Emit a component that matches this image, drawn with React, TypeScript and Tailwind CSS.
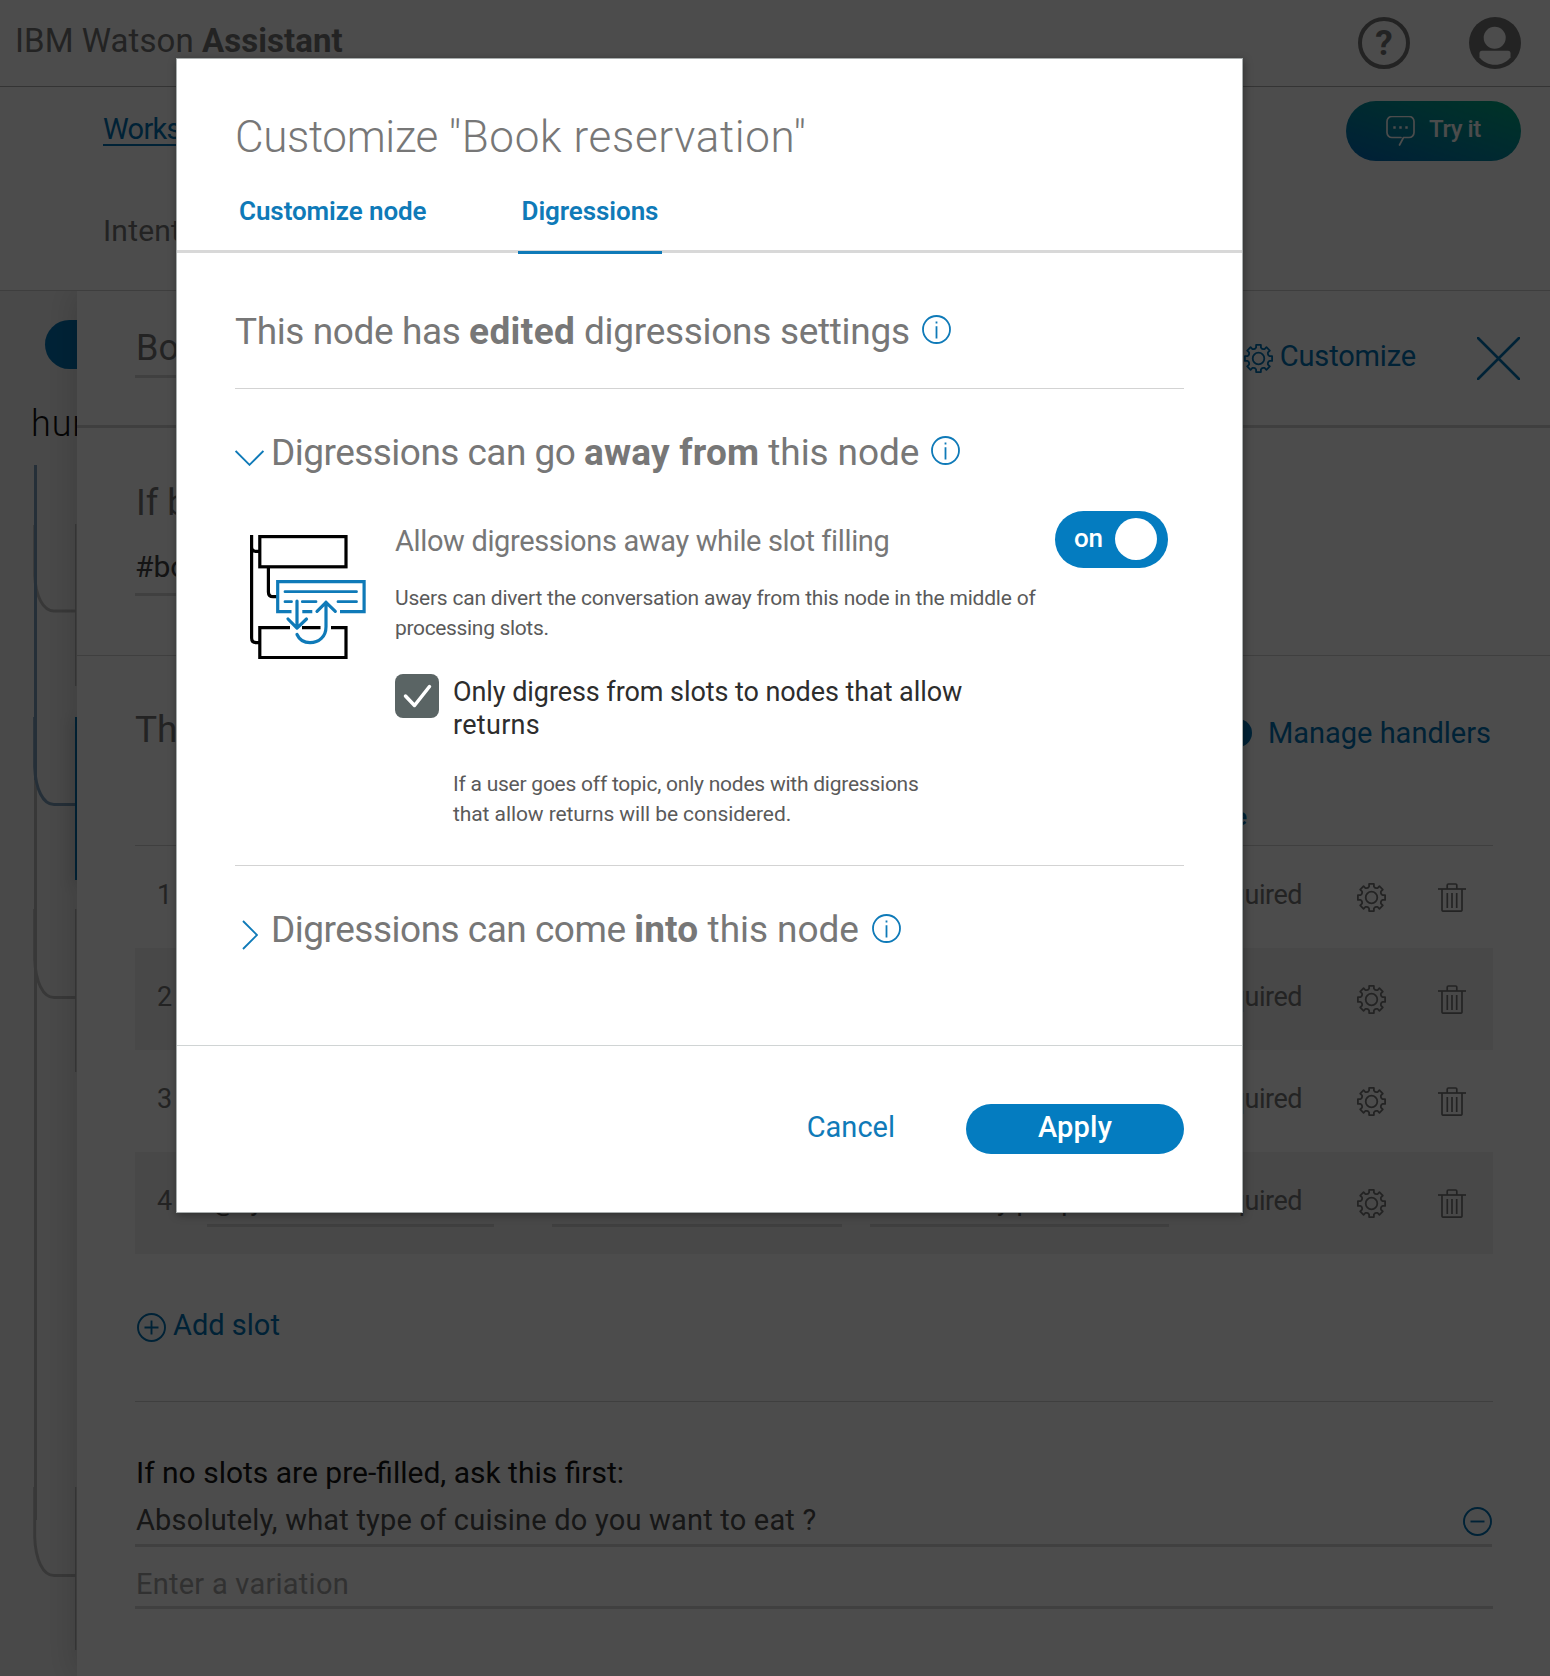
import React from "react";

const TOOTH_ANGLES = [0, 45, 90, 135, 180, 225, 270, 315];
const TOOTH_POINTS: [number, number][] = [
  [-3.3, -9.9],
  [-2.4, -11],
  [-2.4, -13.6],
  [2.4, -13.6],
  [2.4, -11],
  [3.3, -9.9],
];

const gearPath =
  "M" +
  TOOTH_ANGLES.flatMap((deg) => {
    const a = (deg * Math.PI) / 180;
    return TOOTH_POINTS.map(
      ([x, y]) =>
        `${(14.5 + x * Math.cos(a) - y * Math.sin(a)).toFixed(2)} ${(14.5 + x * Math.sin(a) + y * Math.cos(a)).toFixed(2)}`,
    );
  }).join("L") +
  "Z";

function GearIcon({ className = "" }: { className?: string }) {
  return (
    <svg className={`h-[29px] w-[29px] shrink-0 ${className}`} viewBox="0 0 29 29" fill="none" stroke="currentColor" strokeWidth="1.8" strokeLinejoin="round">
      <path d={gearPath} />
      <circle cx="14.5" cy="14.5" r="5.8" />
    </svg>
  );
}

function TrashIcon({ className = "" }: { className?: string }) {
  return (
    <svg className={`h-[29px] w-[28px] shrink-0 ${className}`} viewBox="0 0 28 29" fill="none" stroke="currentColor" strokeWidth="1.7">
      <path d="M0 6h28" />
      <path d="M9.2 6V2.2a1.2 1.2 0 0 1 1.2-1.2h7.2a1.2 1.2 0 0 1 1.2 1.2V6" />
      <path d="M4 6v21a1.2 1.2 0 0 0 1.2 1.2h17.6a1.2 1.2 0 0 0 1.2-1.2V6" />
      <path d="M9.3 10v15M14 10v15M18.7 10v15" />
    </svg>
  );
}

function InfoIcon({ className = "" }: { className?: string }) {
  return (
    <svg className={`h-[29px] w-[29px] shrink-0 text-[#0f7ab8] ${className}`} viewBox="0 0 29 29" fill="none" stroke="currentColor" strokeWidth="1.8">
      <circle cx="14.5" cy="14.5" r="13.5" />
      <path d="M14.5 11.2v12.2M14.5 6.6v2" />
    </svg>
  );
}

function CircleIcon({ plus = false, className = "" }: { plus?: boolean; className?: string }) {
  return (
    <svg className={`h-[29px] w-[29px] shrink-0 ${className}`} viewBox="0 0 29 29" fill="none" stroke="currentColor" strokeWidth="1.9">
      <circle cx="14.5" cy="14.5" r="13.5" />
      <path d={plus ? "M7.5 14.5h14M14.5 7.5v14" : "M7.5 14.5h14"} />
    </svg>
  );
}

function TopBar() {
  return (
    <header className="flex h-[87px] items-start border-b border-[#aeaeae] pl-[15px] pr-[29px]">
      <h1 className="mt-[21px] whitespace-pre text-[33px] leading-10 tracking-[0.06px] text-[#777]">
        IBM Watson <b className="font-bold">Assistant</b>
      </h1>
      <div className="ml-auto mt-[17px] flex gap-[59px] text-[#777]">
        <div className="flex h-[52px] w-[52px] items-center justify-center rounded-full border-[4.5px] border-[#777] text-[35px] font-bold leading-none">
          ?
        </div>
        <svg className="h-[52px] w-[52px]" viewBox="0 0 52 52">
          <circle cx="26" cy="26" r="26" fill="currentColor" />
          <circle cx="25.7" cy="20.7" r="11" fill="#fff" />
          <path d="M13 33.700h26a2.500 2.500 0 0 1 2.500 2.500v4C38 45 32 47.800 26 47.800S14 45 10.500 40.200v-4a2.500 2.500 0 0 1 2.500-2.500z" fill="#fff" />
        </svg>
      </div>
    </header>
  );
}

function WorkspaceNav() {
  return (
    <nav className="flex h-[204px] items-start border-b border-[#cfcfcf] pl-[103px] pr-[29px]">
      <div className="pt-[22px]">
        <div className="flex h-10">
          <a className="h-[37px] border-b-2 border-[#0072b5] text-[29px] leading-10 tracking-[-0.7px] text-[#0072b5]">Workspaces</a>
        </div>
        <div className="mt-[62px] text-[30px] leading-10 tracking-[0.2px] text-[#777]">Intents</div>
      </div>
      <button className="ml-auto mt-3.5 flex h-[60px] w-[175px] items-start rounded-full bg-linear-to-tr from-[#0068b8] to-[#00ac80] pl-10 text-white">
        <svg className="mt-[15px] h-[30px] w-[29px]" viewBox="0 0 29 30" fill="none" stroke="currentColor" strokeWidth="1.7">
          <path d="M13.500 29l4-7.500H23a5 5 0 0 0 5-5v-11a5 5 0 0 0-5-5H6a5 5 0 0 0-5 5v11a5 5 0 0 0 5 5h9" strokeLinecap="round" strokeLinejoin="round" />
          <path d="M7.300 11.500h2.400M13.300 11.500h2.400M19.300 11.500h2.400" strokeWidth="2.4" />
        </svg>
        <span className="ml-[14px] mt-2 text-[24px] font-medium leading-10 tracking-[-0.4px]">Try it</span>
      </button>
    </nav>
  );
}

/* Strip of the dialog tree that stays visible beside the node panel. */
function TreeRail() {
  return (
    <aside className="relative h-[1385px] w-[77px] shrink-0 overflow-hidden bg-[#f5f5f5]">
      <svg className="absolute inset-0 h-full w-full" viewBox="0 291 77 1385" fill="none" strokeWidth="3">
        <path d="M35.500 780v740" stroke="#bdbdbd" />
        <path d="M34.700 525v50C35.500 596 43 611 54 611h22M34.700 909v50C35.500 982 43 997.500 54 997.500h22M34.700 1487v50C35.500 1560 43 1575.500 54 1575.500h22" stroke="#bdbdbd" />
        <path d="M34.700 717v50C35.500 789 43 804.500 54 804.500h22" stroke="#7d9fbc" />
        <path d="M35.500 465v315" stroke="#7d9fbc" />
        <path d="M75.700 524v162M75.700 909v163M75.700 1487v163" stroke="#bdbdbd" strokeWidth="1.3" />
      </svg>
      <div className="absolute left-[45px] top-[29px] h-[49px] w-[120px] rounded-full bg-[#0076b8]" />
      <div className="absolute left-[31px] top-[113px] whitespace-nowrap text-[36px] font-light leading-10 tracking-[0.9px] text-[#111]">hungry</div>
      <div className="absolute left-[75px] top-[426px] h-[163px] w-[4px] bg-[#0072b5] shadow-[0_4px_16px_rgba(0,0,0,0.3)]" />
    </aside>
  );
}

function SlotRow({ index }: { index: number }) {
  return (
    <div className="flex h-[102px] items-start pl-[22px] pr-[27px] text-[27px] leading-10 text-[#777] even:bg-[#f1f1f1]">
      <div className="mt-[29px] w-[50px]">{index}</div>
      {index === 4 ? (
        <>
          <div className="mt-[29px] h-[46px] w-[287px] border-b-[3px] border-[#d2d2d2] pl-[5px] text-[#555]">@sys-number</div>
          <div className="ml-[58px] mt-[29px] h-[46px] w-[290px] border-b-[3px] border-[#d2d2d2]" />
          <div className="ml-[28px] mt-[29px] h-[46px] w-[299px] whitespace-nowrap border-b-[3px] border-[#d2d2d2] pl-3 text-[#555]">How many people</div>
        </>
      ) : null}
      <div className="ml-auto mt-[29px] tracking-[-0.5px]">Required</div>
      <GearIcon className="ml-[55px] mt-[37px]" />
      <TrashIcon className="ml-[52px] mt-[37px]" />
    </div>
  );
}

function NodePanel() {
  return (
    <main className="relative h-[1385px] grow bg-white shadow-[0_0_34px_rgba(0,0,0,0.18)]">
      <section className="flex h-[137px] items-start border-b-[3px] border-[#d2d2d2] pl-[58px]">
        <div className="mt-[35px] h-[52px] w-[900px] border-b-[3px] border-[#d8d8d8] pl-px text-[36px] leading-[44px] text-[#777]">Book</div>
        <div className="ml-auto mr-[30px] flex text-[#0072b5]">
          <GearIcon className="mt-[53px]" />
          <span className="ml-[7px] mt-[45px] text-[29px] leading-10 tracking-[-0.15px]">Customize</span>
          <svg className="ml-[61px] mt-[46px] h-[43px] w-[43px]" viewBox="0 0 43 43" fill="none" stroke="currentColor" strokeWidth="2.6" strokeLinecap="round">
            <path d="M1 1l41 41M42 1L1 42" />
          </svg>
        </div>
      </section>

      <section className="h-[228px] border-b border-[#d2d2d2] pl-[58px] pt-[53px]">
        <div className="pl-px text-[36px] leading-[44px] text-[#777]">If bot</div>
        <div className="mt-[22px] h-[49px] w-[900px] border-b-[3px] border-[#d8d8d8] text-[30px] leading-10 text-[#444]">#book</div>
      </section>

      <section className="pl-[58px] pr-[57px]">
        <div className="flex h-[190px] items-start border-b border-[#d2d2d2] pt-[52px]">
          <div className="text-[37px] leading-[44px] text-[#777]">Then</div>
          <div className="ml-auto flex text-[#0072b5]">
            <div className="relative mt-[11px] h-7 w-7 rounded-full bg-[#0072b5]">
              <div className="absolute right-[5px] top-[83px] text-[24px] font-bold leading-[30px]">e</div>
            </div>
            <span className="ml-4 mr-[2px] mt-[5px] text-[29px] leading-10">Manage handlers</span>
          </div>
        </div>
        <div>
          {[1, 2, 3, 4].map((n) => (
            <SlotRow key={n} index={n} />
          ))}
        </div>
        <div className="flex h-[148px] items-start border-b border-[#d2d2d2] pt-[51px] text-[#0072b5]">
          <CircleIcon plus className="ml-0.5 mt-2" />
          <span className="ml-[7px] text-[29px] leading-10">Add slot</span>
        </div>
        <div className="pl-px pt-[51px] text-[30px] leading-10 text-[#151515]">If no slots are pre-filled, ask this first:</div>
        <div className="mr-px mt-[7px] flex h-[47px] justify-between border-b-[3px] border-[#d5d5d5] pl-px text-[29px] leading-10 tracking-[0.2px] text-[#4d4d4d]">
          Absolutely, what type of cuisine do you want to eat ?
          <CircleIcon className="mt-[7px] text-[#0072b5]" />
        </div>
        <div className="mt-[17px] h-[45px] border-b-[3px] border-[#d5d5d5] pl-px text-[29px] leading-10 tracking-[0.25px] text-[#a5a5a5]">Enter a variation</div>
      </section>
    </main>
  );
}

function DigressionIllustration() {
  return (
    <svg className="ml-[15px] mt-6 h-[124px] w-[116px] shrink-0" viewBox="0 0 116 124" fill="none" strokeWidth="3.2">
      <g stroke="#000">
        <rect x="9.800" y="1.600" width="86.200" height="30.200" />
        <path d="M1.600 0v103q0 4.700 4.700 4.700H10M1.600 12q0 4.300 4.300 4.300H10M18.400 33v24q0 4.700 4.700 4.700H27" />
        <path d="M40 92.600H9.800v29.900h86.200V92.600H81M52 92.600h18.500" />
      </g>
      <g stroke="#0f7ab8">
        <path d="M41.500 76.700H27.700v-30h86.400v30H90M52.300 76.700h10" />
        <path d="M35 56.700h71.500M35 66.700h6.500M52.300 66.700H66M88 66.700h18.500" strokeWidth="2.800" strokeLinecap="round" />
        <path d="M47 66v27M38 84l9 9.200 9.500-9.200" strokeLinecap="round" strokeLinejoin="round" />
        <path d="M47 99.500C49.500 105 54 107.700 60 107.700c9 0 16-6 16-16V67M67 76.300l9-9 9.300 9" strokeLinecap="round" strokeLinejoin="round" />
      </g>
    </svg>
  );
}

function CustomizeDialog() {
  return (
    <div role="dialog" className="absolute left-[176px] top-[58px] flex h-[1155px] w-[1067px] flex-col border border-[#a8adad] bg-white shadow-[1px_2px_8px_rgba(0,0,0,0.35)]">
      <div className="border-b-[3px] border-[#d8d8d8] pl-[58px] pt-[50px]">
        <h2 className="whitespace-pre text-[44px] font-light leading-[56px] tracking-[0.65px] text-[#777]">
          <span className="tracking-[-0.35px]">Customize </span>"Book reservation"
        </h2>
        <div className="-mb-1 mt-[30px] flex h-[59px] text-[26px] font-semibold leading-8 tracking-[-0.08px] text-[#0f7ab8]">
          <div className="w-[283px] pl-1">Customize node</div>
          <div className="w-36 border-b-[3px] border-[#0f7ab8] text-center">Digressions</div>
        </div>
      </div>

      <div className="grow px-[58px] text-[#777]">
        <div className="flex items-center border-b border-[#d3d3d3] pb-8 pt-[55px]">
          <h3 className="whitespace-pre text-[37px] leading-[48px] tracking-[-0.4px]">
            This node has <b className="tracking-[0.35px]">edited</b><span className="tracking-[-0.3px]"> digressions settings</span>
          </h3>
          <InfoIcon className="-mt-1.5 ml-[12px]" />
        </div>

        <div className="border-b border-[#d3d3d3] pb-[35px] pt-[40px]">
          <div className="flex items-center">
            <svg className="mt-2.5 h-4 w-[29px] shrink-0 text-[#0f7ab8]" viewBox="0 0 29 16" fill="none" stroke="currentColor" strokeWidth="1.900">
              <path d="M0.600 1l13.900 13.800L28.400 1" />
            </svg>
            <h3 className="ml-[7px] whitespace-pre text-[37px] leading-[48px] tracking-[-0.53px]">
              Digressions can go <b className="tracking-[0.2px]">away from</b><span className="tracking-[-0.1px]"> this node</span>
            </h3>
            <InfoIcon className="-mt-1.5 ml-[12px]" />
          </div>

          <div className="mt-[34px] flex items-start">
            <DigressionIllustration />
            <div className="ml-[29px] grow">
              <div className="flex h-12 items-start">
                <div className="mt-3 text-[29px] leading-9 tracking-[-0.36px]">Allow digressions away while slot filling</div>
                <div className="ml-auto mr-4 flex h-[57px] w-[113px] items-center justify-between rounded-full bg-[#047cc0] pl-[19px] pr-[11px] text-[26px] font-medium leading-none text-white">
                  <span className="-mt-1 tracking-[-0.2px]">on</span>
                  <span className="-mt-px h-[42px] w-[42px] rounded-full bg-white" />
                </div>
              </div>
              <p className="mt-6 text-[21px] leading-[30px] tracking-[-0.22px] text-[#5a5a5a]">
                Users can divert the conversation away from this node in the middle of
                <br />
                <span className="tracking-[-0.34px]">processing slots.</span>
              </p>
              <div className="mt-[31px] flex">
                <svg className="h-11 w-11 shrink-0 rounded-lg bg-[#5a6464]" viewBox="0 0 44 44" fill="none" stroke="#fff" strokeWidth="3.500" strokeLinecap="round" strokeLinejoin="round">
                  <path d="M10.500 22l9 9.500L34.500 12.500" />
                </svg>
                <div className="ml-[14px] mt-0.5">
                  <div className="text-[27px] leading-[33px] tracking-[-0.07px] text-[#2d2d2d]">
                    Only digress from slots to nodes that allow
                    <br />
                    <span className="tracking-[0.3px]">returns</span>
                  </div>
                  <p className="mt-[27px] text-[21px] leading-[30px] tracking-[-0.24px] text-[#5a5a5a]">
                    If a user goes off topic, only nodes with digressions
                    <br />
                    <span className="tracking-[-0.08px]">that allow returns will be considered.</span>
                  </p>
                </div>
              </div>
            </div>
          </div>
          <div className="h-px" />
        </div>

        <div className="flex items-center pt-[40px]">
          <svg className="ml-[7px] mt-[10px] h-[30px] w-4 shrink-0 text-[#0f7ab8]" viewBox="0 0 16 30" fill="none" stroke="currentColor" strokeWidth="1.900">
            <path d="M1 1l14 14L1 29" />
          </svg>
          <h3 className="ml-[13px] whitespace-pre text-[37px] leading-[48px] tracking-[-0.5px]">
            Digressions can come <b className="tracking-[0.2px]">into</b><span className="tracking-[-0.05px]"> this node</span>
          </h3>
          <InfoIcon className="-mt-1 ml-[13px]" />
        </div>
      </div>

      <div className="flex h-[167px] shrink-0 items-start justify-end border-t border-[#d0d4d4] pr-[58px] pt-[58px] text-[29px] leading-[46px]">
        <button className="mr-[71px] text-[#0f7ab8]">Cancel</button>
        <button className="h-[50px] w-[218px] rounded-full bg-[#047cc0] pb-1 font-medium tracking-[0.2px] text-white">Apply</button>
      </div>
    </div>
  );
}

export default function App() {
  return (
    <div className="relative h-[1676px] w-[1550px] overflow-hidden bg-white font-[Roboto,'Liberation_Sans',sans-serif]">
      <TopBar />
      <WorkspaceNav />
      <div className="flex overflow-hidden">
        <TreeRail />
        <NodePanel />
      </div>
      <div className="absolute inset-0 bg-black/70" />
      <CustomizeDialog />
    </div>
  );
}
